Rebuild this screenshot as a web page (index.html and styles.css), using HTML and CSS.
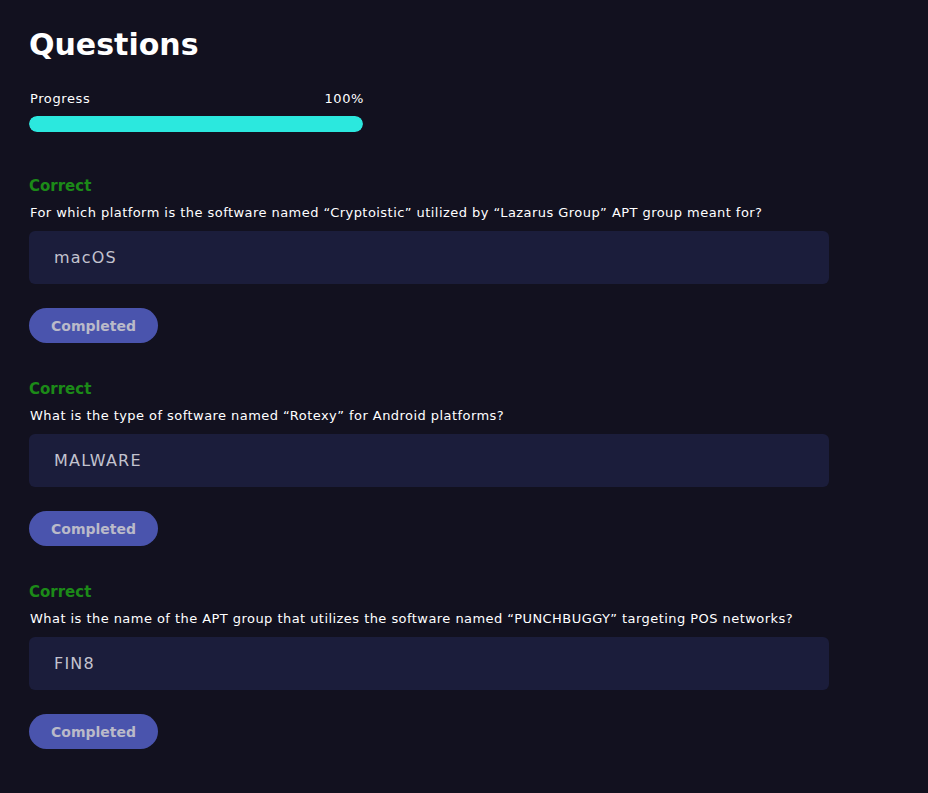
FILE: index.html
```html
<!DOCTYPE html>
<html>
<head>
<meta charset="utf-8">
<link rel="stylesheet" href="styles.css">
</head>
<body>
<main class="page">
  <h1 class="title">Questions</h1>
  <div class="progress">
    <div class="progress-head"><span>Progress</span><span class="pct">100%</span></div>
    <div class="progress-track"><div class="progress-fill" style="width:100%"></div></div>
  </div>

  <section class="question">
    <div class="status">Correct</div>
    <p class="q-text">For which platform is the software named “Cryptoistic” utilized by “Lazarus Group” APT group meant for?</p>
    <div class="answer">macOS</div>
    <button class="btn">Completed</button>
  </section>

  <section class="question">
    <div class="status">Correct</div>
    <p class="q-text">What is the type of software named “Rotexy” for Android platforms?</p>
    <div class="answer">MALWARE</div>
    <button class="btn">Completed</button>
  </section>

  <section class="question">
    <div class="status">Correct</div>
    <p class="q-text">What is the name of the APT group that utilizes the software named “PUNCHBUGGY” targeting POS networks?</p>
    <div class="answer">FIN8</div>
    <button class="btn">Completed</button>
  </section>
</main>
</body>
</html>
```
FILE: styles.css
```css
html, body {
  margin: 0;
  padding: 0;
  background: #12111f;
}
body {
  font-family: "DejaVu Sans", "Noto Sans", sans-serif;
  color: #ffffff;
}
.page {
  padding: 27px 29px 40px 29px;
  display: flex;
  flex-direction: column;
}
.title {
  margin: 0;
  font-size: 30px;
  line-height: 36px;
  font-weight: 700;
}
.progress {
  margin-top: 27px;
  width: 334px;
}
.progress-head {
  display: flex;
  justify-content: space-between;
  font-size: 13px;
  line-height: 18px;
  font-weight: 500;
  letter-spacing: 0.6px;
  padding-left: 1px;
}
.pct {
  margin-right: -1px;
}
.progress-track {
  margin-top: 8px;
  height: 16px;
  border-radius: 8px;
  background: #23223a;
  overflow: hidden;
}
.progress-fill {
  height: 100%;
  background: #2be8de;
  border-radius: 8px;
}
.question {
  display: flex;
  flex-direction: column;
  align-items: flex-start;
  margin-top: 44px;
}
.question + .question {
  margin-top: 36px;
}
.status {
  color: #1c8a18;
  font-weight: 700;
  font-size: 15px;
  line-height: 20px;
}
.q-text {
  margin: 8px 0 0 0;
  font-size: 13px;
  line-height: 18px;
  letter-spacing: 0.45px;
  padding-left: 1px;
}
.answer {
  margin-top: 9px;
  box-sizing: border-box;
  width: 800px;
  height: 53px;
  border-radius: 6px;
  background: #1b1d3b;
  color: #c3c3cf;
  font-size: 16px;
  letter-spacing: 1.2px;
  padding-left: 25px;
  display: flex;
  align-items: center;
}
.btn {
  margin-top: 24px;
  width: 129px;
  height: 35px;
  border: none;
  border-radius: 18px;
  background: #4a54ad;
  color: #babac9;
  font-family: inherit;
  font-weight: 700;
  font-size: 14px;
  padding: 0;
}
```
